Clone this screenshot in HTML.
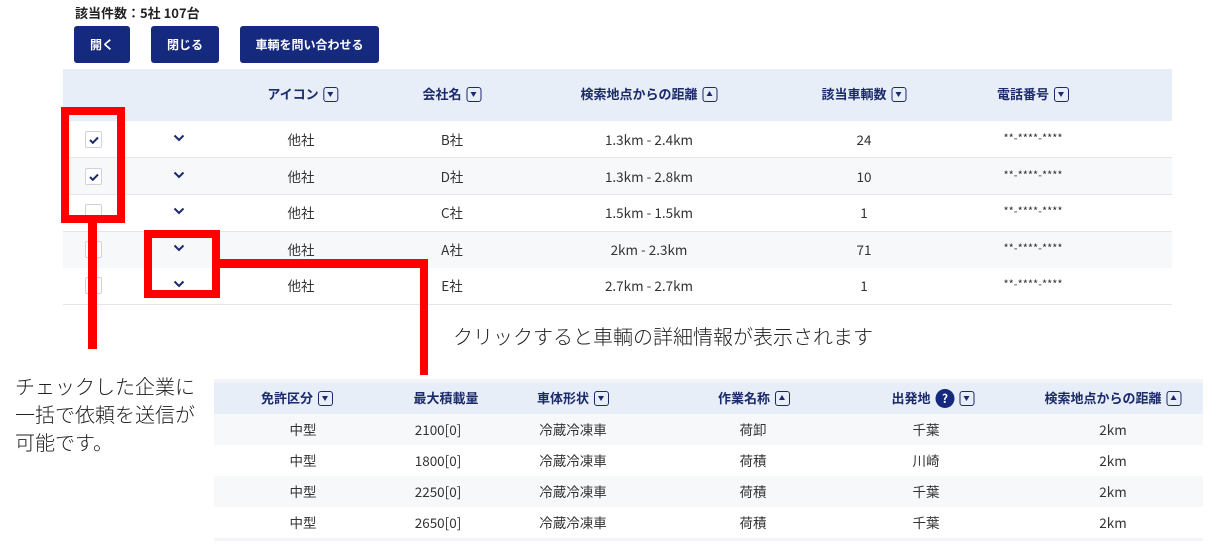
<!DOCTYPE html>
<html><head><meta charset="utf-8"><style>
*{margin:0;padding:0;box-sizing:border-box}
body{width:1218px;height:548px;background:#fff;position:relative;overflow:hidden;font-family:"Noto Sans CJK JP","Liberation Sans",sans-serif;color:#333}
.a{position:absolute}
.btn{position:absolute;top:26px;height:37px;background:#15297e;color:#fff;font-size:12px;font-weight:bold;border-radius:3px;display:flex;align-items:center;justify-content:center;line-height:1}
.h{position:absolute;font-size:13px;font-weight:bold;color:#1b2a6b;transform:translateX(-50%);white-space:nowrap;display:flex;align-items:center;gap:5px;line-height:18px;height:18px}
.c{position:absolute;font-size:13.5px;color:#333;transform:translateX(-50%);white-space:nowrap;line-height:18px;height:18px}
.s{display:inline-block;width:15px;height:15px;border:1.5px solid #1b2a6b;border-radius:3px;position:relative}
.s:after{content:"";position:absolute;left:3px;top:4px;border-left:3.5px solid transparent;border-right:3.5px solid transparent;border-top:5px solid #1b2a6b}
.s.u:after{top:3px;border-top:0;border-bottom:5px solid #1b2a6b}
.row{position:absolute;left:63px;width:1109px;height:37px;border-bottom:1px solid #e4e6ea}
.cb{position:absolute;left:85px;width:17px;height:17px;border:1px solid #cfd3da;border-radius:2px;background:#fff}
.chev{position:absolute;left:173px;width:12px;height:8px}
.r{background:#f00;position:absolute}
.t{position:absolute;font-size:20px;color:#222;line-height:28px;white-space:nowrap;font-family:"Noto Sans CJK JP",sans-serif;font-weight:300}
</style></head><body>
<div class="a" style="left:75px;top:4px;font-size:13px;font-weight:bold;color:#222;line-height:18px">該当件数：5社 107台</div>
<div class="btn" style="left:74px;width:56px">開く</div>
<div class="btn" style="left:151px;width:68px">閉じる</div>
<div class="btn" style="left:240px;width:139px">車輌を問い合わせる</div>

<div class="a" style="left:63px;top:69px;width:1109px;height:52px;background:#e8eef8"></div>
<div class="h" style="left:303px;top:85px">アイコン<span class="s"></span></div>
<div class="h" style="left:452px;top:85px">会社名<span class="s"></span></div>
<div class="h" style="left:649px;top:85px">検索地点からの距離<span class="s u"></span></div>
<div class="h" style="left:864px;top:85px">該当車輌数<span class="s"></span></div>
<div class="h" style="left:1033px;top:85px">電話番号<span class="s"></span></div>

<div class="row" style="top:121px;background:#fff"></div>
<div class="row" style="top:158px;background:#f7f8fa"></div>
<div class="row" style="top:195px;background:#fff"></div>
<div class="row" style="top:232px;background:#f7f8fa"></div>
<div class="row" style="top:268px;background:#fff"></div>

<div class="cb" style="top:131px"></div><svg class="a" style="left:89px;top:136px" width="10" height="8"><path d="M1 4 L3.8 6.8 L9 1.5" stroke="#1b2a6b" stroke-width="2" fill="none"/></svg>
<div class="cb" style="top:168px"></div><svg class="a" style="left:89px;top:173px" width="10" height="8"><path d="M1 4 L3.8 6.8 L9 1.5" stroke="#1b2a6b" stroke-width="2" fill="none"/></svg>
<div class="cb" style="top:204px"></div>
<div class="cb" style="top:241px"></div>
<div class="cb" style="top:277px"></div>
<svg class="chev" style="top:134px" viewBox="0 0 12 8"><path d="M1.5 1.5 L6 6 L10.5 1.5" stroke="#1b2a6b" stroke-width="2" fill="none"/></svg>
<svg class="chev" style="top:171px" viewBox="0 0 12 8"><path d="M1.5 1.5 L6 6 L10.5 1.5" stroke="#1b2a6b" stroke-width="2" fill="none"/></svg>
<svg class="chev" style="top:207px" viewBox="0 0 12 8"><path d="M1.5 1.5 L6 6 L10.5 1.5" stroke="#1b2a6b" stroke-width="2" fill="none"/></svg>
<svg class="chev" style="top:244px" viewBox="0 0 12 8"><path d="M1.5 1.5 L6 6 L10.5 1.5" stroke="#1b2a6b" stroke-width="2" fill="none"/></svg>
<svg class="chev" style="top:280px" viewBox="0 0 12 8"><path d="M1.5 1.5 L6 6 L10.5 1.5" stroke="#1b2a6b" stroke-width="2" fill="none"/></svg>

<div class="c" style="left:301px;top:130px">他社</div><div class="c" style="left:452px;top:130px">B社</div><div class="c" style="left:649px;top:130px">1.3km - 2.4km</div><div class="c" style="left:864px;top:130px">24</div><div class="c" style="left:1033px;top:129px;font-size:11px">**-****-****</div>
<div class="c" style="left:301px;top:167px">他社</div><div class="c" style="left:452px;top:167px">D社</div><div class="c" style="left:649px;top:167px">1.3km - 2.8km</div><div class="c" style="left:864px;top:167px">10</div><div class="c" style="left:1033px;top:166px;font-size:11px">**-****-****</div>
<div class="c" style="left:301px;top:203px">他社</div><div class="c" style="left:452px;top:203px">C社</div><div class="c" style="left:649px;top:203px">1.5km - 1.5km</div><div class="c" style="left:864px;top:203px">1</div><div class="c" style="left:1033px;top:202px;font-size:11px">**-****-****</div>
<div class="c" style="left:301px;top:240px">他社</div><div class="c" style="left:452px;top:240px">A社</div><div class="c" style="left:649px;top:240px">2km - 2.3km</div><div class="c" style="left:864px;top:240px">71</div><div class="c" style="left:1033px;top:239px;font-size:11px">**-****-****</div>
<div class="c" style="left:301px;top:276px">他社</div><div class="c" style="left:452px;top:276px">E社</div><div class="c" style="left:649px;top:276px">2.7km - 2.7km</div><div class="c" style="left:864px;top:276px">1</div><div class="c" style="left:1033px;top:275px;font-size:11px">**-****-****</div>

<div class="a" style="left:214px;top:379px;width:989px;height:4px;background:#f3f4f7"></div>
<div class="a" style="left:214px;top:383px;width:989px;height:31px;background:#e8eef8"></div>
<div class="a" style="left:214px;top:414px;width:989px;height:31px;background:#f7f8fa"></div>
<div class="a" style="left:214px;top:476px;width:989px;height:31px;background:#f7f8fa"></div>
<div class="a" style="left:214px;top:538px;width:989px;height:3px;background:#f3f4f7"></div>
<div class="h" style="left:297px;top:389px">免許区分<span class="s"></span></div>
<div class="h" style="left:446px;top:389px">最大積載量</div>
<div class="h" style="left:573px;top:389px">車体形状<span class="s"></span></div>
<div class="h" style="left:754px;top:389px">作業名称<span class="s u"></span></div>
<div class="h" style="left:933px;top:389px">出発地<span style="display:inline-block;width:19px;height:19px;border-radius:50%;background:#15297e;color:#fff;font-size:12px;text-align:center;line-height:19px">?</span><span class="s"></span></div>
<div class="h" style="left:1113px;top:389px">検索地点からの距離<span class="s u"></span></div>

<div class="c" style="left:303px;top:420px">中型</div><div class="c" style="left:438px;top:420px">2100[0]</div><div class="c" style="left:573px;top:420px">冷蔵冷凍車</div><div class="c" style="left:753px;top:420px">荷卸</div><div class="c" style="left:926px;top:420px">千葉</div><div class="c" style="left:1113px;top:420px">2km</div>
<div class="c" style="left:303px;top:451px">中型</div><div class="c" style="left:438px;top:451px">1800[0]</div><div class="c" style="left:573px;top:451px">冷蔵冷凍車</div><div class="c" style="left:753px;top:451px">荷積</div><div class="c" style="left:926px;top:451px">川崎</div><div class="c" style="left:1113px;top:451px">2km</div>
<div class="c" style="left:303px;top:482px">中型</div><div class="c" style="left:438px;top:482px">2250[0]</div><div class="c" style="left:573px;top:482px">冷蔵冷凍車</div><div class="c" style="left:753px;top:482px">荷積</div><div class="c" style="left:926px;top:482px">千葉</div><div class="c" style="left:1113px;top:482px">2km</div>
<div class="c" style="left:303px;top:513px">中型</div><div class="c" style="left:438px;top:513px">2650[0]</div><div class="c" style="left:573px;top:513px">冷蔵冷凍車</div><div class="c" style="left:753px;top:513px">荷積</div><div class="c" style="left:926px;top:513px">千葉</div><div class="c" style="left:1113px;top:513px">2km</div>

<div class="a" style="left:61px;top:107px;width:64px;height:116px;border:8px solid #f00"></div>
<div class="r" style="left:88px;top:222px;width:9px;height:127px"></div>
<div class="a" style="left:144px;top:230px;width:76px;height:68px;border:8px solid #f00"></div>
<div class="r" style="left:219px;top:259px;width:209px;height:9px"></div>
<div class="r" style="left:420px;top:259px;width:8px;height:116px"></div>

<div class="t" style="left:453px;top:322px">クリックすると車輌の詳細情報が表示されます</div>
<div class="t" style="left:15px;top:372px">チェックした企業に<br>一括で依頼を送信が<br>可能です。</div>
</body></html>
